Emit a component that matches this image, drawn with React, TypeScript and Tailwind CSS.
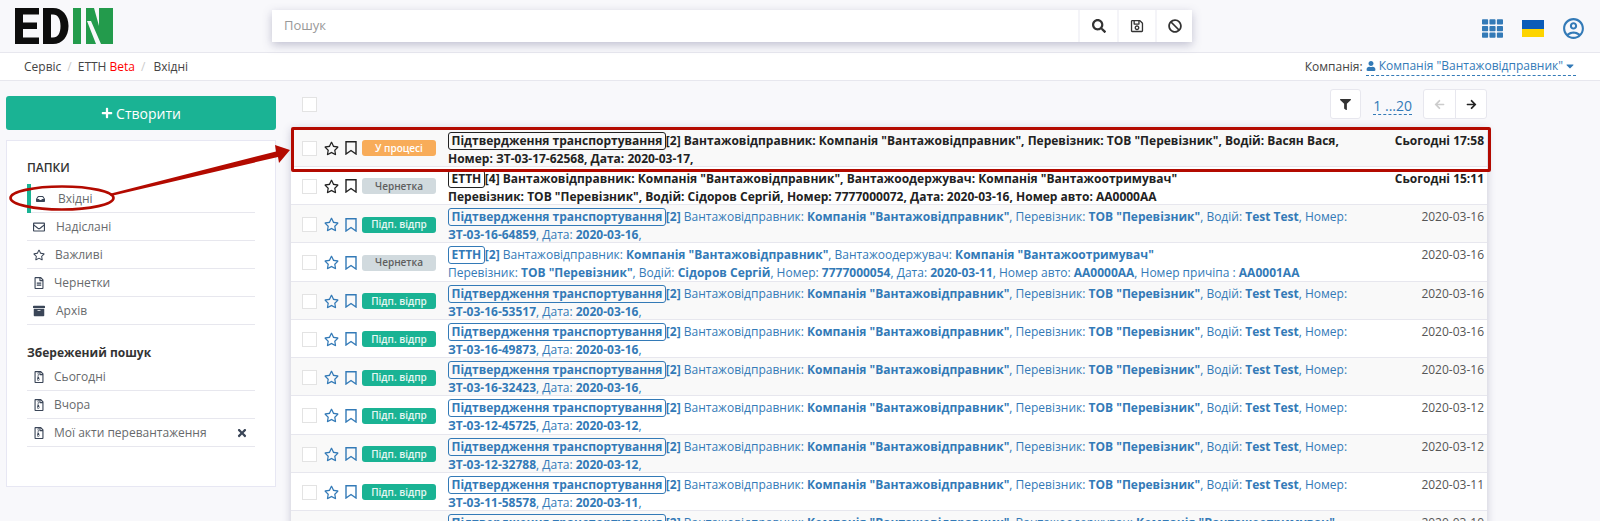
import React from "react";
import {
  FaSearch, FaRegSave, FaBan, FaTh, FaUser, FaCaretDown, FaPlus, FaInbox,
  FaRegEnvelope, FaRegStar, FaRegFileAlt, FaArchive, FaRegFileArchive, FaTimes, FaFilter,
  FaArrowLeft, FaArrowRight,
} from "react-icons/fa";
import { MdOutlineAccountCircle } from "react-icons/md";

type Row = { label: string; n: number; status: "Підп. відпр" | "Чернетка" | "У процесі"; date: string; l1: React.ReactNode; l2: React.ReactNode; unread?: boolean };

const B = ({ children }: { children: React.ReactNode }) => <b className="font-bold">{children}</b>;

function tt(num: string, date: string): Pick<Row, "l1" | "l2"> {
  return {
    l1: <>Вантажовідправник: <B>Компанія "Вантажовідправник"</B>, Перевізник: <B>ТОВ "Перевізник"</B>, Водій: <B>Test Test</B>, Номер:</>,
    l2: <><B>{num}</B>, Дата: <B>{date}</B>,</>,
  };
}

const rows: Row[] = [
  { label: "Підтвердження транспортування", n: 2, status: "У процесі", date: "Сьогодні 17:58", unread: true,
    l1: <>Вантажовідправник: Компанія "Вантажовідправник", Перевізник: ТОВ "Перевізник", Водій: Васян Вася,</>,
    l2: <>Номер: ЗТ-03-17-62568, Дата: 2020-03-17,</> },
  { label: "ЕТТН", n: 4, status: "Чернетка", date: "Сьогодні 15:11", unread: true,
    l1: <>Вантажовідправник: Компанія "Вантажовідправник", Вантажоодержувач: Компанія "Вантажоотримувач"</>,
    l2: <>Перевізник: ТОВ "Перевізник", Водій: Сідоров Сергій, Номер: 7777000072, Дата: 2020-03-16, Номер авто: AA0000AA</> },
  { label: "Підтвердження транспортування", n: 2, status: "Підп. відпр", date: "2020-03-16", ...tt("ЗТ-03-16-64859", "2020-03-16") },
  { label: "ЕТТН", n: 2, status: "Чернетка", date: "2020-03-16",
    l1: <>Вантажовідправник: <B>Компанія "Вантажовідправник"</B>, Вантажоодержувач: <B>Компанія "Вантажоотримувач"</B></>,
    l2: <>Перевізник: <B>ТОВ "Перевізник"</B>, Водій: <B>Сідоров Сергій</B>, Номер: <B>7777000054</B>, Дата: <B>2020-03-11</B>, Номер авто: <B>AA0000AA</B>, Номер причіпа : <B>AA0001AA</B></> },
  { label: "Підтвердження транспортування", n: 2, status: "Підп. відпр", date: "2020-03-16", ...tt("ЗТ-03-16-53517", "2020-03-16") },
  { label: "Підтвердження транспортування", n: 2, status: "Підп. відпр", date: "2020-03-16", ...tt("ЗТ-03-16-49873", "2020-03-16") },
  { label: "Підтвердження транспортування", n: 2, status: "Підп. відпр", date: "2020-03-16", ...tt("ЗТ-03-16-32423", "2020-03-16") },
  { label: "Підтвердження транспортування", n: 2, status: "Підп. відпр", date: "2020-03-12", ...tt("ЗТ-03-12-45725", "2020-03-12") },
  { label: "Підтвердження транспортування", n: 2, status: "Підп. відпр", date: "2020-03-12", ...tt("ЗТ-03-12-32788", "2020-03-12") },
  { label: "Підтвердження транспортування", n: 2, status: "Підп. відпр", date: "2020-03-11", ...tt("ЗТ-03-11-58578", "2020-03-11") },
  { label: "Підтвердження транспортування", n: 2, status: "Підп. відпр", date: "2020-03-10",
    l1: <>Вантажовідправник: <B>Компанія "Вантажовідправник"</B>, Вантажоодержувач: <B>Компанія "Вантажоотримувач"</B></>,
    l2: <></> },
];

function Logo() {
  return (
    <svg width="98" height="36" viewBox="15 8 98 36" className="block">
      <path fill="#0d0d0d" d="M15 8h24v6.500H23v8h14v6.500H23v8.500h16V44H15z" />
      <path fill="#0d0d0d" fillRule="evenodd" d="M43 8h10c9.500 0 15.500 7.500 15.500 18S62.500 44 53 44H43zm8 6.500v23h2c5 0 7.500-4.500 7.500-11.500S58 14.500 53 14.500z" />
      <path fill="#239b4c" d="M73 8h8v36h-8zM86 8h27v36H86z" />
      <path fill="#f8f8fb" d="M94 8h5v18zM87 21h4l10 23h-5z" />
    </svg>
  );
}

function Flag() {
  return (
    <div className="w-[22px]">
      <div className="h-[9px] bg-[#0b5cb8]" />
      <div className="h-[8px] bg-[#fdd400]" />
    </div>
  );
}

function Top() {
  return (
    <header className="h-[53px] flex items-center border-b border-[#e7e7ee] pl-[15px] pr-[14px]">
      <div className="w-[257px] shrink-0"><Logo /></div>
      <div className="w-[920px] h-[32px] flex bg-white shadow-[0_3px_10px_rgba(90,90,130,0.35)]">
        <div className="flex-1 flex items-center pl-[12px] text-[13px] text-[#999]">Пошук</div>
        <div className="w-[39px] border-l-2 border-[#f4f4f8] flex items-center justify-center text-[#333] text-[14px]"><FaSearch /></div>
        <div className="w-[38px] border-l-2 border-[#f4f4f8] flex items-center justify-center text-[#333] text-[14px]"><FaRegSave /></div>
        <div className="w-[37px] border-l-2 border-[#f4f4f8] flex items-center justify-center text-[#333] text-[14px]"><FaBan /></div>
      </div>
      <div className="ml-auto flex items-center mt-[4px]">
        <FaTh className="text-[#337ab7] text-[21px]" />
        <div className="ml-[19px]"><Flag /></div>
        <MdOutlineAccountCircle className="ml-[17px] text-[#337ab7] text-[25px]" />
      </div>
    </header>
  );
}

function Crumbs() {
  return (
    <div className="h-[28px] bg-white border-b border-[#e7e7ee] flex items-center pl-[24px] pr-[24px] text-[12px] text-[#444]">
      <span>Сервіс</span><span className="mx-[6px] text-[#ccc]">/</span>
      <span>ЕТТН <span className="text-[#f00]">Beta</span></span><span className="mx-[6px] text-[#ccc]">/</span>
      <span className="ml-[2px]">Вхідні</span>
      <div className="ml-auto flex items-center">
        <span className="mr-[3px]">Компанія:</span>
        <span className="flex items-center text-[#337ab7] border-b border-dashed border-[#337ab7] h-[18px]">
          <FaUser className="text-[10px] mr-[3px]" />Компанія "Вантажовідправник"<FaCaretDown className="text-[12px] ml-[1px]" />
        </span>
      </div>
    </div>
  );
}

function Item({ icon, label, active, x, gap }: { icon: React.ReactNode; label: string; active?: boolean; x?: boolean; gap: string }) {
  return (
    <div className="relative h-[28px] border-b border-[#e7e7ee] flex items-center pl-[5px] pr-[7px] text-[12px] text-[#676a6c]">
      {active && <div className="absolute left-0 -top-[1px] -bottom-[1px] w-[4px] bg-[#1ab394]" />}
      <span className="text-[#3b4658] text-[12px] w-[12px] flex justify-center ml-[1px]">{icon}</span>
      <span className={gap}>{label}</span>
      {x && <FaTimes className="ml-auto text-[#3b4658] text-[12px]" />}
    </div>
  );
}

function Sidebar() {
  return (
    <aside className="w-[270px] ml-[6px] shrink-0 pt-[15px]">
      <button className="w-full h-[34px] rounded-[3px] bg-[#1ab394] text-white text-[14px] flex items-center justify-center gap-[3px]">
        <FaPlus className="text-[12px]" />Створити
      </button>
      <div className="mt-[10px] h-[347px] bg-white border border-[#e7e7f3] pl-[20px] pr-[20px] pt-[18px]">
        <div className="text-[12px] font-semibold text-[#333] mb-[2px] leading-[17px]">ПАПКИ</div>
        <div className="mt-[9px]">
          <Item active icon={<FaInbox className="ml-[3px]" />} label="Вхідні" gap="ml-[13px]" />
          <Item icon={<FaRegEnvelope />} label="Надіслані" gap="ml-[11px]" />
          <Item icon={<FaRegStar />} label="Важливі" gap="ml-[10px]" />
          <Item icon={<FaRegFileAlt />} label="Чернетки" gap="ml-[9px]" />
          <Item icon={<FaArchive />} label="Архів" gap="ml-[11px]" />
        </div>
        <div className="mt-[19px] text-[12px] font-bold text-[#333] leading-[17px]">Збережений пошук</div>
        <div className="mt-[2px]">
          <Item icon={<FaRegFileArchive />} label="Сьогодні" gap="ml-[9px]" />
          <Item icon={<FaRegFileArchive />} label="Вчора" gap="ml-[9px]" />
          <Item x icon={<FaRegFileArchive />} label="Мої акти перевантаження" gap="ml-[9px]" />
        </div>
      </div>
    </aside>
  );
}

function Check() {
  return <div className="w-[15px] h-[15px] border border-[#e3e3e3] bg-white shrink-0" />;
}

function BookmarkIcon({ className }: { className: string }) {
  return (
    <svg width="12" height="14" viewBox="0 0 12 14" fill="none" stroke="currentColor" strokeWidth="1.400" className={className}>
      <path d="M1 .7h10v12.300L6 9.500 1 13z" />
    </svg>
  );
}

const badgeClass: Record<Row["status"], string> = {
  "Підп. відпр": "bg-[#1ab394] text-[#e6f7f3]",
  "Чернетка": "bg-[#d1dade] text-[#5e5e5e]",
  "У процесі": "bg-[#f8ac59] text-white",
};

function ListRow({ r, i }: { r: Row; i: number }) {
  const dark = r.unread;
  return (
    <div className={`h-[38.25px] border-b border-[#e7e7ee] flex items-center pl-[11px] pr-[3px] pt-[2px] text-[12px] leading-[17.14px] ${i % 2 === 0 ? "bg-[#f9f9f9]" : "bg-white"}`}>
      <Check />
      <FaRegStar className={`ml-[7px] text-[15px] shrink-0 ${dark ? "text-[#222]" : "text-[#337ab7]"}`} />
      <BookmarkIcon className={`ml-[6px] shrink-0 ${dark ? "text-[#222]" : "text-[#337ab7]"}`} />
      <div className={`ml-[5px] w-[74px] h-[16px] rounded-[3px] flex items-center justify-center text-[10px] font-semibold shrink-0 ${badgeClass[r.status]}`}>{r.status}</div>
      <div className={`ml-[12px] flex-1 self-start pt-[1px] whitespace-nowrap overflow-hidden ${dark ? "text-[#222] font-bold" : "text-[#337ab7]"}`}>
        <div className="h-[18px]">
          <span className={`inline-block leading-[16px] px-[2.500px] rounded-[3px] border font-bold ${dark ? "border-[#222]" : "border-[#337ab7]"}`}>{r.label}</span>
          <b className="font-bold">[{r.n}]</b> {r.l1}
        </div>
        <div>{r.l2}</div>
      </div>
      <div className={`self-start pt-[1px] ${dark ? "font-bold text-[#222]" : "text-[#555]"}`}>{r.date}</div>
    </div>
  );
}

function List() {
  return (
    <main className="ml-[15px] w-[1196px] shrink-0">
      <div className="h-[47.5px] relative flex items-start pt-[8px]">
        <div className="ml-[11px] mt-[8px]"><Check /></div>
        <div className="ml-auto flex items-start">
          <div className="w-[31px] h-[30px] bg-white border border-[#e7e7ee] rounded-[3px] flex items-center justify-center text-[11px] text-[#333]"><FaFilter /></div>
          <div className="ml-[12px] mt-[8px] text-[#337ab7] text-[14px] leading-[17px] border-b border-dashed border-[#337ab7]">1 ...20</div>
          <div className="ml-[11px] flex w-[64px] h-[30px] bg-white border border-[#e7e7ee] rounded-[3px] text-[11px]">
            <div className="w-[32px] border-r border-[#e7e7ee] flex items-center justify-center text-[#ccc]"><FaArrowLeft /></div>
            <div className="flex-1 flex items-center justify-center text-[#222]"><FaArrowRight /></div>
          </div>
        </div>
      </div>
      <div className="shadow-[0_0_8px_rgba(90,90,130,0.3)]">
        {rows.map((r, i) => <ListRow key={i} r={r} i={i} />)}
      </div>
    </main>
  );
}

function Annotation() {
  return (
    <>
      <div className="absolute left-[291px] top-[127px] w-[1200px] h-[45px] border-[3px] border-[#b30a00] rounded-[2px]" />
      <svg className="absolute left-0 top-0 pointer-events-none" width="300" height="220" viewBox="0 0 300 220">
        <ellipse cx="62" cy="198" rx="51.500" ry="11.500" fill="none" stroke="#b30a00" strokeWidth="2.600" />
        <path fill="#b30a00" d="M109 194L276 151.500L275 145L290 150L279 163L278 157L111 196z" />
      </svg>
    </>
  );
}

export default function App() {
  return (
    <div className="relative h-[521px] overflow-hidden bg-[#f8f8fb]" style={{ fontFamily: '"Open Sans", "Noto Sans", sans-serif' }}>
      <Top />
      <Crumbs />
      <div className="flex">
        <Sidebar />
        <List />
      </div>
      <Annotation />
    </div>
  );
}
